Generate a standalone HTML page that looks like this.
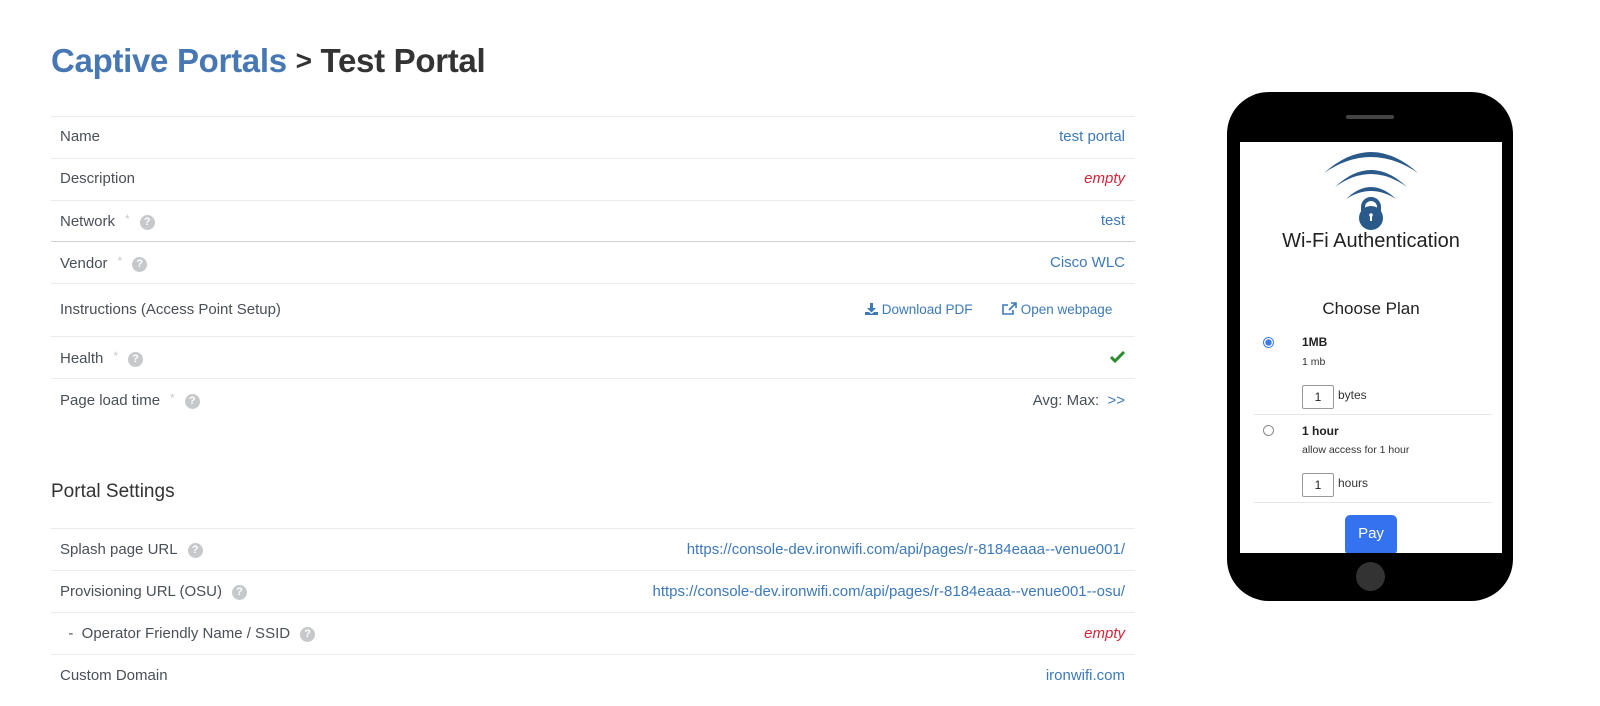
<!DOCTYPE html>
<html><head><meta charset="utf-8"><style>
body{margin:0;width:1600px;height:706px;background:#fff;font-family:"Liberation Sans",sans-serif;position:relative;overflow:hidden;color:#4a5057}
.a{position:absolute}
h1{position:absolute;left:51px;top:42px;margin:0;font-size:33px;font-weight:bold;color:#333;letter-spacing:-0.3px}
h1 span{color:#4878b4}
.line{position:absolute;left:51px;width:1084px;height:1px;background:#e9ecef}
.lbl{position:absolute;left:60px;font-size:15px;color:#4a5057}
.val{position:absolute;right:475px;font-size:15px;color:#3d79b9}
.emp{color:#d0263a;font-style:italic}
.st{color:#c8cacc;font-size:12px;margin-left:10px;vertical-align:3px}
.q{display:inline-block;width:15px;height:15px;border-radius:50%;background:#c6c8ca;color:#fff;font-size:11px;font-weight:bold;text-align:center;line-height:15px;margin-left:10px;vertical-align:1px}
</style></head><body>
<h1><span>Captive Portals</span> <span style="color:#333;font-size:28px;vertical-align:2px">&gt;</span> Test Portal</h1>

<div class="line" style="top:116px"></div>
<div class="line" style="top:158px"></div>
<div class="line" style="top:200px"></div>
<div class="line" style="top:241px;background:#ced3d8"></div>
<div class="line" style="top:283px"></div>
<div class="line" style="top:336px"></div>
<div class="line" style="top:378px"></div>

<div class="lbl" style="top:128px">Name</div><div class="val" style="top:128px">test portal</div>
<div class="lbl" style="top:170px">Description</div><div class="val emp" style="top:170px">empty</div>
<div class="lbl" style="top:212px">Network<span class="st">*</span><span class="q">?</span></div><div class="val" style="top:212px">test</div>
<div class="lbl" style="top:254px">Vendor<span class="st">*</span><span class="q">?</span></div><div class="val" style="top:254px">Cisco WLC</div>
<div class="lbl" style="top:301px">Instructions (Access Point Setup)</div>
<div class="a" style="left:865px;top:302px;font-size:13.5px;color:#3d79b9"><svg width="13" height="12" viewBox="0 0 13 12" style="vertical-align:-1px"><path d="M5 0h3v5h3l-4.5 4.5L2 5h3z M0 9h4l2.5 2 2.5-2h4v3H0z" fill="#3d79b9"/></svg> Download PDF</div>
<div class="a" style="left:1002px;top:302px;font-size:13.5px;color:#3d79b9"><svg width="15" height="13" viewBox="0 0 15 13" style="vertical-align:-1px"><path d="M9 1h5v5 M14 1L7 8 M11 8v4H1V3h5" fill="none" stroke="#3d79b9" stroke-width="1.6"/></svg> Open webpage</div>
<div class="lbl" style="top:349px">Health<span class="st">*</span><span class="q">?</span></div>
<svg class="a" style="left:1110px;top:351px" width="15" height="12" viewBox="0 0 15 12"><path d="M1 6l4 4 9-9" fill="none" stroke="#2e8b2e" stroke-width="3"/></svg>
<div class="lbl" style="top:391px">Page load time<span class="st">*</span><span class="q">?</span></div>
<div class="val" style="top:392px;color:#4a5057">Avg: Max: &nbsp;<span style="color:#3d79b9">&gt;&gt;</span></div>

<div class="a" style="left:51px;top:481px;font-size:19px;color:#333">Portal Settings</div>
<div class="line" style="top:528px"></div>
<div class="line" style="top:570px"></div>
<div class="line" style="top:612px"></div>
<div class="line" style="top:654px"></div>
<div class="lbl" style="top:541px">Splash page URL<span class="q">?</span></div><div class="val" style="top:541px">https://console-dev.ironwifi.com/api/pages/r-8184eaaa--venue001/</div>
<div class="lbl" style="top:583px">Provisioning URL (OSU)<span class="q">?</span></div><div class="val" style="top:583px">https://console-dev.ironwifi.com/api/pages/r-8184eaaa--venue001--osu/</div>
<div class="lbl" style="top:625px">&nbsp;&nbsp;-&nbsp; Operator Friendly Name / SSID<span class="q">?</span></div><div class="val emp" style="top:625px">empty</div>
<div class="lbl" style="top:667px">Custom Domain</div><div class="val" style="top:667px">ironwifi.com</div>

<!-- phone -->
<div class="a" style="left:1227px;top:92px;width:286px;height:509px;background:#000;border-radius:42px"></div>
<div class="a" style="left:1346px;top:115px;width:48px;height:4px;background:#444;border-radius:2px"></div>
<div class="a" style="left:1356px;top:562px;width:29px;height:29px;background:#333;border-radius:50%"></div>
<div class="a" style="left:1240px;top:142px;width:262px;height:411px;background:#fff;overflow:hidden">
 <svg class="a" style="left:81px;top:3px" width="100" height="86" viewBox="0 0 100 86"><g fill="#2a5a8a">
  <path d="M3 28Q50 -14 97 28Q50 -4 3 28z"/>
  <path d="M14 42Q50 8 86 42Q50 16 14 42z"/>
  <path d="M25 54Q50 30 75 54Q50 38 25 54z"/></g>
  <path d="M42 68v-6a8 8 0 0 1 16 0v6" fill="none" stroke="#2a5a8a" stroke-width="4"/><circle cx="50" cy="73" r="12" fill="#2a5a8a"/><rect x="49" y="70" width="2" height="6" fill="#fff"/><circle cx="50" cy="70" r="1.8" fill="#fff"/></svg>
 <div class="a" style="left:0;width:262px;top:88px;text-align:center;font-size:20px;color:#222">Wi-Fi Authentication</div>
 <div class="a" style="left:0;width:262px;top:157px;text-align:center;font-size:17px;color:#222">Choose Plan</div>
 <div class="a" style="left:23px;top:195px;width:9px;height:9px;border-radius:50%;border:1px solid #3b7bf0;background:radial-gradient(#3b7bf0 45%,#fff 55%)"></div>
 <div class="a" style="left:62px;top:193px;font-size:12px;font-weight:bold;color:#222">1MB</div>
 <div class="a" style="left:62px;top:214px;font-size:10.5px;color:#333">1 mb</div>
 <div class="a" style="left:62px;top:243px;width:30px;height:22px;border:1px solid #999;border-radius:2px;font-size:12px;text-align:center;line-height:22px;color:#222">1</div>
 <div class="a" style="left:98px;top:246px;font-size:12px;color:#333">bytes</div>
 <div class="a" style="left:14px;top:272px;width:238px;height:1px;background:#e8e8e8"></div>
 <div class="a" style="left:23px;top:283px;width:9px;height:9px;border-radius:50%;border:1px solid #888"></div>
 <div class="a" style="left:62px;top:282px;font-size:12px;font-weight:bold;color:#222">1 hour</div>
 <div class="a" style="left:62px;top:302px;font-size:10.5px;color:#333">allow access for 1 hour</div>
 <div class="a" style="left:62px;top:331px;width:30px;height:22px;border:1px solid #999;border-radius:2px;font-size:12px;text-align:center;line-height:22px;color:#222">1</div>
 <div class="a" style="left:98px;top:334px;font-size:12px;color:#333">hours</div>
 <div class="a" style="left:14px;top:360px;width:238px;height:1px;background:#e8e8e8"></div>
 <div class="a" style="left:105px;top:373px;width:52px;height:40px;background:#3572ef;border-radius:5px;color:#fff;font-size:15px;text-align:center;line-height:38px">Pay</div>
</div>
</body></html>
